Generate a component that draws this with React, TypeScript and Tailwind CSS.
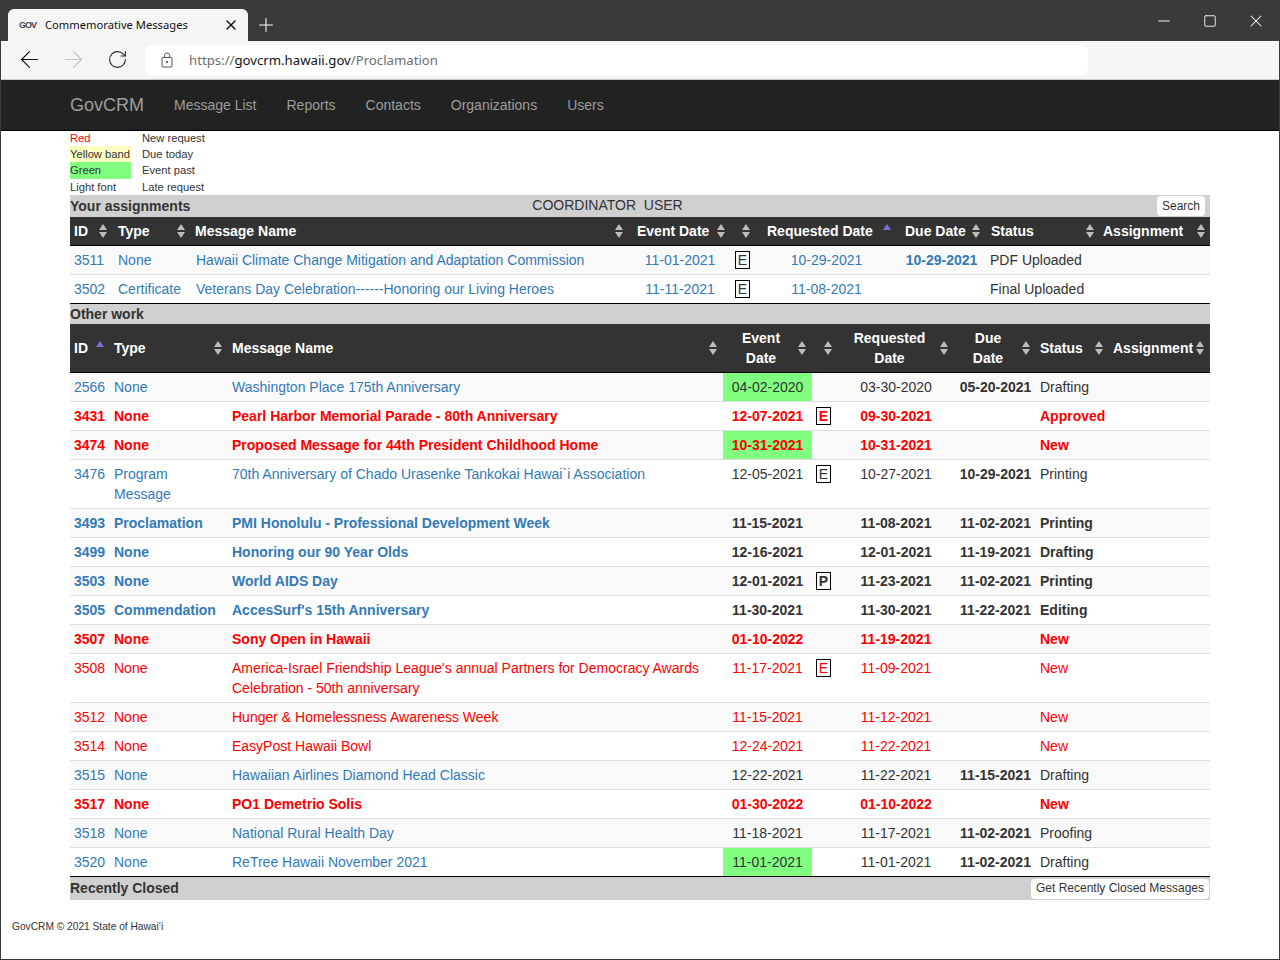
import { ArrowLeft, ArrowRight, Minus, Plus, RotateCw, Square, X } from "lucide-react";

type Col = { label: string[]; sort: string; th: string; active?: boolean };
type Row = {
  id: string;
  type: string;
  name: string;
  event: string;
  badge?: string;
  req: string;
  due?: string;
  status: string;
  tone: "blue" | "red";
  bold?: boolean;
  past?: boolean;
};

const cols1: Col[] = [
  { label: ["ID"], sort: "right-[7px]", th: "w-[44px] text-left" },
  { label: ["Type"], sort: "right-[6px]", th: "w-[77px] text-left" },
  { label: ["Message Name"], sort: "right-[10px]", th: "w-[442px] text-left" },
  { label: ["Event Date"], sort: "right-[6px]", th: "w-[98px] text-left" },
  { label: [], sort: "right-[5px]", th: "w-[24px] text-left" },
  { label: ["Requested Date"], sort: "right-[10px]", th: "w-[146px] pl-[12px] text-left", active: true },
  { label: ["Due Date"], sort: "right-[7px]", th: "w-[86px] text-left" },
  { label: ["Status"], sort: "right-[5px]", th: "w-[112px] text-left" },
  { label: ["Assignment"], sort: "right-[5px]", th: "w-[111px] text-left" },
];

const cols2: Col[] = [
  { label: ["ID"], sort: "right-[6px]", th: "w-[40px] text-left", active: true },
  { label: ["Type"], sort: "right-[6px]", th: "w-[118px] text-left" },
  { label: ["Message Name"], sort: "right-[6px]", th: "w-[495px] text-left" },
  { label: ["Event", "Date"], sort: "right-[6px]", th: "w-[89px] text-center pr-[17px]" },
  { label: [], sort: "right-[5px]", th: "w-[25px] text-left" },
  { label: ["Requested", "Date"], sort: "right-[7px]", th: "w-[118px] text-center pr-[17px]" },
  { label: ["Due", "Date"], sort: "right-[6px]", th: "w-[81px] text-center pr-[19px]" },
  { label: ["Status"], sort: "right-[6px]", th: "w-[73px] text-left" },
  { label: ["Assignment"], sort: "right-[6px]", th: "w-[101px] text-left" },
];

const other: Row[] = [
  { id: "2566", type: "None", name: "Washington Place 175th Anniversary", event: "04-02-2020", req: "03-30-2020", due: "05-20-2021", status: "Drafting", tone: "blue", past: true },
  { id: "3431", type: "None", name: "Pearl Harbor Memorial Parade - 80th Anniversary", event: "12-07-2021", badge: "E", req: "09-30-2021", status: "Approved", tone: "red", bold: true },
  { id: "3474", type: "None", name: "Proposed Message for 44th President Childhood Home", event: "10-31-2021", req: "10-31-2021", status: "New", tone: "red", bold: true, past: true },
  { id: "3476", type: "Program Message", name: "70th Anniversary of Chado Urasenke Tankokai Hawai`i Association", event: "12-05-2021", badge: "E", req: "10-27-2021", due: "10-29-2021", status: "Printing", tone: "blue" },
  { id: "3493", type: "Proclamation", name: "PMI Honolulu - Professional Development Week", event: "11-15-2021", req: "11-08-2021", due: "11-02-2021", status: "Printing", tone: "blue", bold: true },
  { id: "3499", type: "None", name: "Honoring our 90 Year Olds", event: "12-16-2021", req: "12-01-2021", due: "11-19-2021", status: "Drafting", tone: "blue", bold: true },
  { id: "3503", type: "None", name: "World AIDS Day", event: "12-01-2021", badge: "P", req: "11-23-2021", due: "11-02-2021", status: "Printing", tone: "blue", bold: true },
  { id: "3505", type: "Commendation", name: "AccesSurf's 15th Anniversary", event: "11-30-2021", req: "11-30-2021", due: "11-22-2021", status: "Editing", tone: "blue", bold: true },
  { id: "3507", type: "None", name: "Sony Open in Hawaii", event: "01-10-2022", req: "11-19-2021", status: "New", tone: "red", bold: true },
  { id: "3508", type: "None", name: "America-Israel Friendship League's annual Partners for Democracy Awards Celebration - 50th anniversary", event: "11-17-2021", badge: "E", req: "11-09-2021", status: "New", tone: "red" },
  { id: "3512", type: "None", name: "Hunger & Homelessness Awareness Week", event: "11-15-2021", req: "11-12-2021", status: "New", tone: "red" },
  { id: "3514", type: "None", name: "EasyPost Hawaii Bowl", event: "12-24-2021", req: "11-22-2021", status: "New", tone: "red" },
  { id: "3515", type: "None", name: "Hawaiian Airlines Diamond Head Classic", event: "12-22-2021", req: "11-22-2021", due: "11-15-2021", status: "Drafting", tone: "blue" },
  { id: "3517", type: "None", name: "PO1 Demetrio Solis", event: "01-30-2022", req: "01-10-2022", status: "New", tone: "red", bold: true },
  { id: "3518", type: "None", name: "National Rural Health Day", event: "11-18-2021", req: "11-17-2021", due: "11-02-2021", status: "Proofing", tone: "blue" },
  { id: "3520", type: "None", name: "ReTree Hawaii November 2021", event: "11-01-2021", req: "11-01-2021", due: "11-02-2021", status: "Drafting", tone: "blue", past: true },
];

function SortIcon({ active, pos }: { active?: boolean; pos: string }) {
  return (
    <svg width="8" height="14" viewBox="0 0 8 14" className={`absolute top-1/2 -translate-y-1/2 ${pos}`}>
      <path d="M4 0L8 6H0Z" fill={active ? "#7575d1" : "#bdbdbd"} />
      {!active && <path d="M4 14L0 8H8Z" fill="#bdbdbd" />}
    </svg>
  );
}

function Head({ cols }: { cols: Col[] }) {
  return (
    <thead>
      <tr>
        {cols.map((c, i) => (
          <th
            key={i}
            className={`relative bg-[#333333] border-b border-black p-1 font-bold text-white leading-5 ${c.th}`}
          >
            {c.label.map((l) => (
              <div key={l} className="whitespace-nowrap">{l}</div>
            ))}
            <SortIcon active={c.active} pos={c.sort} />
          </th>
        ))}
      </tr>
    </thead>
  );
}

function Badge({ letter, red }: { letter: string; red?: boolean }) {
  return (
    <span
      className={`mt-px flex h-[18px] w-[15px] items-center justify-center border border-black text-[14px] leading-none ${
        red ? "text-[#ff0000]" : "text-[#333333]"
      }`}
    >
      {letter}
    </span>
  );
}

function Bar({ title, children, className }: { title: string; children?: React.ReactNode; className: string }) {
  return (
    <div className={`flex items-center bg-[#d0d0d0] ${className}`}>
      <b className="font-bold">{title}</b>
      {children}
    </div>
  );
}

function Browser() {
  return (
    <>
      <div className="flex h-[41px] items-end bg-[#3a3a3a] pl-[7px] text-white">
        <div className="flex h-[32px] w-[240px] items-center rounded-t-md bg-[#f5f5f5] pl-[11px] text-[#111]">
          <span className="w-[26px] text-[9px] font-bold tracking-[-1px] text-[#444]">GOV</span>
          <span className="font-['Noto_Sans',sans-serif] text-[11.2px]">Commemorative Messages</span>
          <X size={16} strokeWidth={2} className="ml-auto mr-[9px]" />
        </div>
        <Plus size={22} strokeWidth={1.1} className="mb-[5px] ml-[7px]" />
        <div className="mb-[10px] ml-auto flex items-center text-white">
          <Minus size={18} strokeWidth={1.25} className="mr-[30px]" />
          <Square size={14} strokeWidth={1.5} className="mr-[29px]" />
          <X size={20} strokeWidth={1.25} className="mr-[13px]" />
        </div>
      </div>
      <div className="flex h-[39px] items-center border-b border-[#cccccc] bg-[#f5f5f5] pb-[1px]">
        <ArrowLeft size={27} strokeWidth={1} className="ml-[15px] text-[#111]" />
        <ArrowRight size={27} strokeWidth={1} className="ml-[17px] text-[#c4c4c4]" />
        <RotateCw size={21} strokeWidth={1.2} className="ml-[20px] text-[#222]" />
        <div className="ml-[17px] flex h-[30px] w-[943px] items-center rounded-md bg-white pl-[16px] font-['Noto_Sans',sans-serif] text-[13.2px] text-[#6e6e6e]">
          <svg width="12" height="16" viewBox="0 0 12 16" fill="none" stroke="#555" strokeWidth="1" className="mr-[16px]">
            <rect x="1" y="5.5" width="10" height="9.5" rx="1" />
            <path d="M3.5 5.5V3.5a2.5 2.5 0 0 1 5 0v2" />
            <circle cx="6" cy="10" r="0.8" fill="#555" />
          </svg>
          <span>
            https://<span className="text-[#111]">govcrm.hawaii.gov</span>/Proclamation
          </span>
        </div>
      </div>
    </>
  );
}

export default function App() {
  return (
    <div className="flex h-[960px] w-[1280px] flex-col overflow-hidden border-x border-b border-[#3a3a3a] bg-white font-['Liberation_Sans',Arial,sans-serif] text-[14px] leading-5 text-[#333333]">
      <Browser />

      <nav className="flex h-[51px] shrink-0 items-center border-b border-black bg-[#222222] pl-[69px] text-[#9d9d9d]">
        <span className="mr-[30px] text-[18px]">GovCRM</span>
        <span className="mr-[30px]">Message List</span>
        <span className="mr-[30px]">Reports</span>
        <span className="mr-[30px]">Contacts</span>
        <span className="mr-[30px]">Organizations</span>
        <span>Users</span>
      </nav>

      <main className="px-[69px]">
        <div className="text-[11.2px] leading-none">
          <div className="flex h-[15px] items-center">
            <span className="w-[72px] text-[#ff0000]">Red</span>
            <span>New request</span>
          </div>
          <div className="flex h-[16px] items-center">
            <span className="flex h-full w-[61px] items-center whitespace-nowrap bg-[#ffffc0] pt-[2px]">Yellow band</span>
            <span className="ml-[11px] pt-[2px]">Due today</span>
          </div>
          <div className="flex h-[17px] items-center">
            <span className="flex h-full w-[61px] items-center bg-[#80ff80]">Green</span>
            <span className="ml-[11px]">Event past</span>
          </div>
          <div className="flex h-[16px] items-center pt-[2px]">
            <span className="w-[72px]">Light font</span>
            <span>Late request</span>
          </div>
        </div>

        <Bar title="Your assignments" className="h-[22px]">
          <span className="ml-[342px] -translate-y-[1px] whitespace-pre">COORDINATOR  USER</span>
          <span className="ml-auto mr-[5px] flex h-[20px] w-[48px] items-center justify-center rounded-sm bg-white text-[12px]">
            Search
          </span>
        </Bar>

        <table className="w-[1140px] table-fixed border-separate border-spacing-0">
          <Head cols={cols1} />
          <tbody className="text-[#337ab7]">
            <tr className="bg-[#f9f9f9]">
              <td className="p-1">3511</td>
              <td className="p-1">None</td>
              <td className="py-1 pl-[5px] pr-1">Hawaii Climate Change Mitigation and Adaptation Commission</td>
              <td className="py-1 pl-1 pr-2 text-center">11-01-2021</td>
              <td className="p-1 align-top"><Badge letter="E" /></td>
              <td className="py-1 pl-1 pr-[7px] text-center">10-29-2021</td>
              <td className="py-1 pl-1 pr-[9px] text-center font-bold">10-29-2021</td>
              <td className="py-1 pl-[3px] text-[#333333]">PDF Uploaded</td>
              <td className="p-1"></td>
            </tr>
            <tr>
              <td className="border-t border-t-[#dddddd] border-b-black border-b p-1">3502</td>
              <td className="border-t border-t-[#dddddd] border-b border-b-black p-1 whitespace-nowrap">Certificate</td>
              <td className="border-t border-t-[#dddddd] border-b border-b-black py-1 pl-[5px] pr-1">Veterans Day Celebration------Honoring our Living Heroes</td>
              <td className="border-t border-t-[#dddddd] border-b border-b-black py-1 pl-1 pr-2 text-center">11-11-2021</td>
              <td className="border-t border-t-[#dddddd] border-b border-b-black p-1 align-top"><Badge letter="E" /></td>
              <td className="border-t border-t-[#dddddd] border-b border-b-black py-1 pl-1 pr-[7px] text-center">11-08-2021</td>
              <td className="border-t border-t-[#dddddd] border-b border-b-black p-1"></td>
              <td className="border-t border-t-[#dddddd] border-b border-b-black py-1 pl-[3px] text-[#333333]">Final Uploaded</td>
              <td className="border-t border-t-[#dddddd] border-b border-b-black p-1"></td>
            </tr>
          </tbody>
        </table>

        <Bar title="Other work" className="h-[20px]" />

        <table className="w-[1140px] table-fixed border-separate border-spacing-0">
          <Head cols={cols2} />
          <tbody>
            {other.map((r, i) => {
              const red = r.tone === "red";
              const link = red ? "text-[#ff0000]" : "text-[#337ab7]";
              const plain = red ? "text-[#ff0000]" : "text-[#333333]";
              const line = `align-top p-1 ${i > 0 ? "border-t border-[#dddddd]" : ""} ${
                i === other.length - 1 ? "border-b border-b-black" : ""
              }`;
              return (
                <tr key={r.id} className={`${i % 2 === 0 ? "bg-[#f9f9f9]" : "bg-white"} ${r.bold ? "font-bold" : ""}`}>
                  <td className={`${line} ${link}`}>{r.id}</td>
                  <td className={`${line} ${link}`}>
                    {r.type === "Program Message" ? (
                      <>
                        Program
                        <br />
                        Message
                      </>
                    ) : (
                      r.type
                    )}
                  </td>
                  <td className={`${line} ${link}`}>{r.name}</td>
                  <td className={`${line} ${plain} text-center ${r.past ? "bg-[#80ff80]" : ""}`}>{r.event}</td>
                  <td className={line}>{r.badge && <Badge letter={r.badge} red={red} />}</td>
                  <td className={`${line} ${plain} text-center`}>{r.req}</td>
                  <td className={`${line} ${plain} whitespace-nowrap text-center font-bold`}>{r.due}</td>
                  <td className={`${line} ${plain}`}>{r.status}</td>
                  <td className={line}></td>
                </tr>
              );
            })}
          </tbody>
        </table>

        <Bar title="Recently Closed" className="h-[23px] pb-px">
          <span className="ml-auto mr-[1px] flex h-[20px] w-[178px] translate-y-px items-center justify-center rounded-sm bg-white pb-[2px] text-[12px]">
            Get Recently Closed Messages
          </span>
        </Bar>
      </main>

      <footer className="mt-[21px] pl-[11px] text-[10.2px] leading-3">GovCRM © 2021 State of Hawai‘i</footer>
    </div>
  );
}
